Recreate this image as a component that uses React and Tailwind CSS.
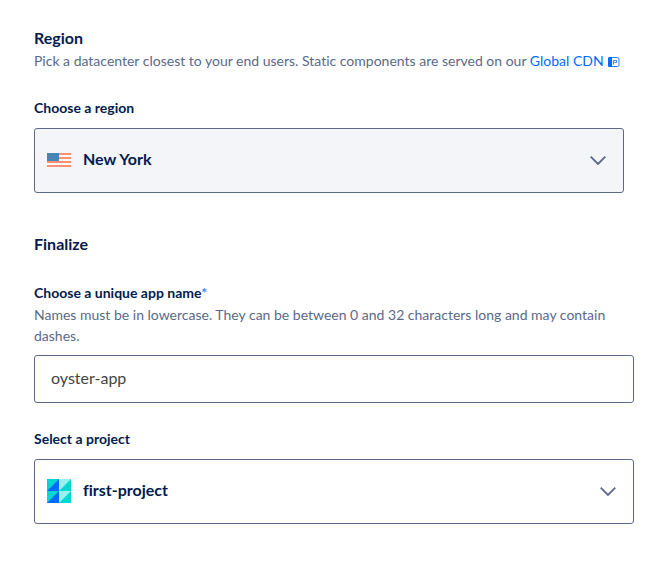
function FlagIcon() {
  return (
    <svg width="24" height="14" viewBox="0 0 24 14" aria-hidden="true">
      <rect width="24" height="14" fill="#fbfafa" />
      <path d="M0 0h24v2H0zM0 4h24v2H0zM0 8h24v2H0zM0 12h24v2H0z" fill="#ff8f70" />
      <rect width="12" height="8" fill="#4a84b5" />
    </svg>
  );
}

function ProjectIcon() {
  return (
    <svg width="24" height="24" viewBox="0 0 24 24" aria-hidden="true">
      <rect width="24" height="24" fill="#00d7d2" />
      <path d="M12 0v12H0zM12 12v12H0z" fill="#0069ff" />
      <path d="M12 0h12L12 12zM12 12h12L12 24z" fill="#99f1ee" />
    </svg>
  );
}

function DocsIcon() {
  return (
    <svg className="ml-1 inline-block align-[-1px]" width="12" height="10" viewBox="0 0 12 10" aria-hidden="true">
      <rect x="0.5" y="0.5" width="10.5" height="9" rx="1.5" fill="#fff" stroke="#2b82ff" />
      <path d="M1.5 0H4v10H1.5A1.5 1.5 0 0 1 0 8.500V1.500A1.500 1.500 0 0 1 1.500 0z" fill="#0069ff" />
      <path d="M5.500 7.500v-4h3v2h-2" fill="none" stroke="#2b82ff" />
    </svg>
  );
}

function Dropdown({ id, label, value, icon: Icon, shade }) {
  return (
    <div>
      <label htmlFor={id} className="block text-sm leading-[21px] font-bold">
        {label}
      </label>
      <div className="relative mt-[10px]">
        <select
          id={id}
          defaultValue={value}
          className={`block h-[65px] w-full appearance-none rounded-[3px] border border-[#5b6987] pr-12 pb-[3px] pl-12 text-base font-bold ${shade}`}
        >
          <option>{value}</option>
        </select>
        <div className="pointer-events-none absolute inset-0 flex items-center justify-between pr-[18px] pl-[13px]">
          <span className="pb-px">
            <Icon />
          </span>
          <svg width="16" height="9" viewBox="0 0 16 9" fill="none" stroke="#5b6987" strokeWidth="1.8" aria-hidden="true">
            <path d="M.7.7 8 8 15.300.7" />
          </svg>
        </div>
      </div>
    </div>
  );
}

export default function App() {
  return (
    <main className="bg-white pt-[26px] pr-[30px] pb-12 pl-[34px] font-['Lato','Open_Sans',sans-serif] text-[#031b4e] [font-variant-ligatures:none]">
      <section className="pr-[10px]">
        <h2 className="text-base leading-6 font-bold">Region</h2>
        <p className="text-sm leading-[21px] text-[#5b6987]">
          Pick a datacenter closest to your end users. Static components are served on our{" "}
          <a href="#cdn" className="whitespace-nowrap text-[#0069ff]">
            Global CDN
            <DocsIcon />
          </a>
        </p>
        <div className="mt-[26px]">
          <Dropdown id="region" label="Choose a region" value="New York" icon={FlagIcon} shade="bg-[#f3f5f9]" />
        </div>
      </section>

      <section className="mt-[39px]">
        <h2 className="text-base leading-6 font-bold">Finalize</h2>
        <div className="mt-[26px]">
          <label htmlFor="app-name" className="block text-sm leading-[21px] font-bold">
            Choose a unique app name<span className="text-[#3385ff]">*</span>
          </label>
          <p id="app-name-hint" className="mt-px text-sm leading-[21px] text-[#5b6987]">
            Names must be in lowercase. They can be between 0 and 32 characters long and may contain dashes.
          </p>
          <input
            id="app-name"
            type="text"
            required
            aria-describedby="app-name-hint"
            defaultValue="oyster-app"
            className="mt-[9px] block h-12 w-full rounded-[3px] border border-[#5b6987] px-4 pb-[3px] text-base text-[#444]"
          />
        </div>
        <div className="mt-[25px]">
          <Dropdown id="project" label="Select a project" value="first-project" icon={ProjectIcon} shade="bg-white" />
        </div>
      </section>
    </main>
  );
}
